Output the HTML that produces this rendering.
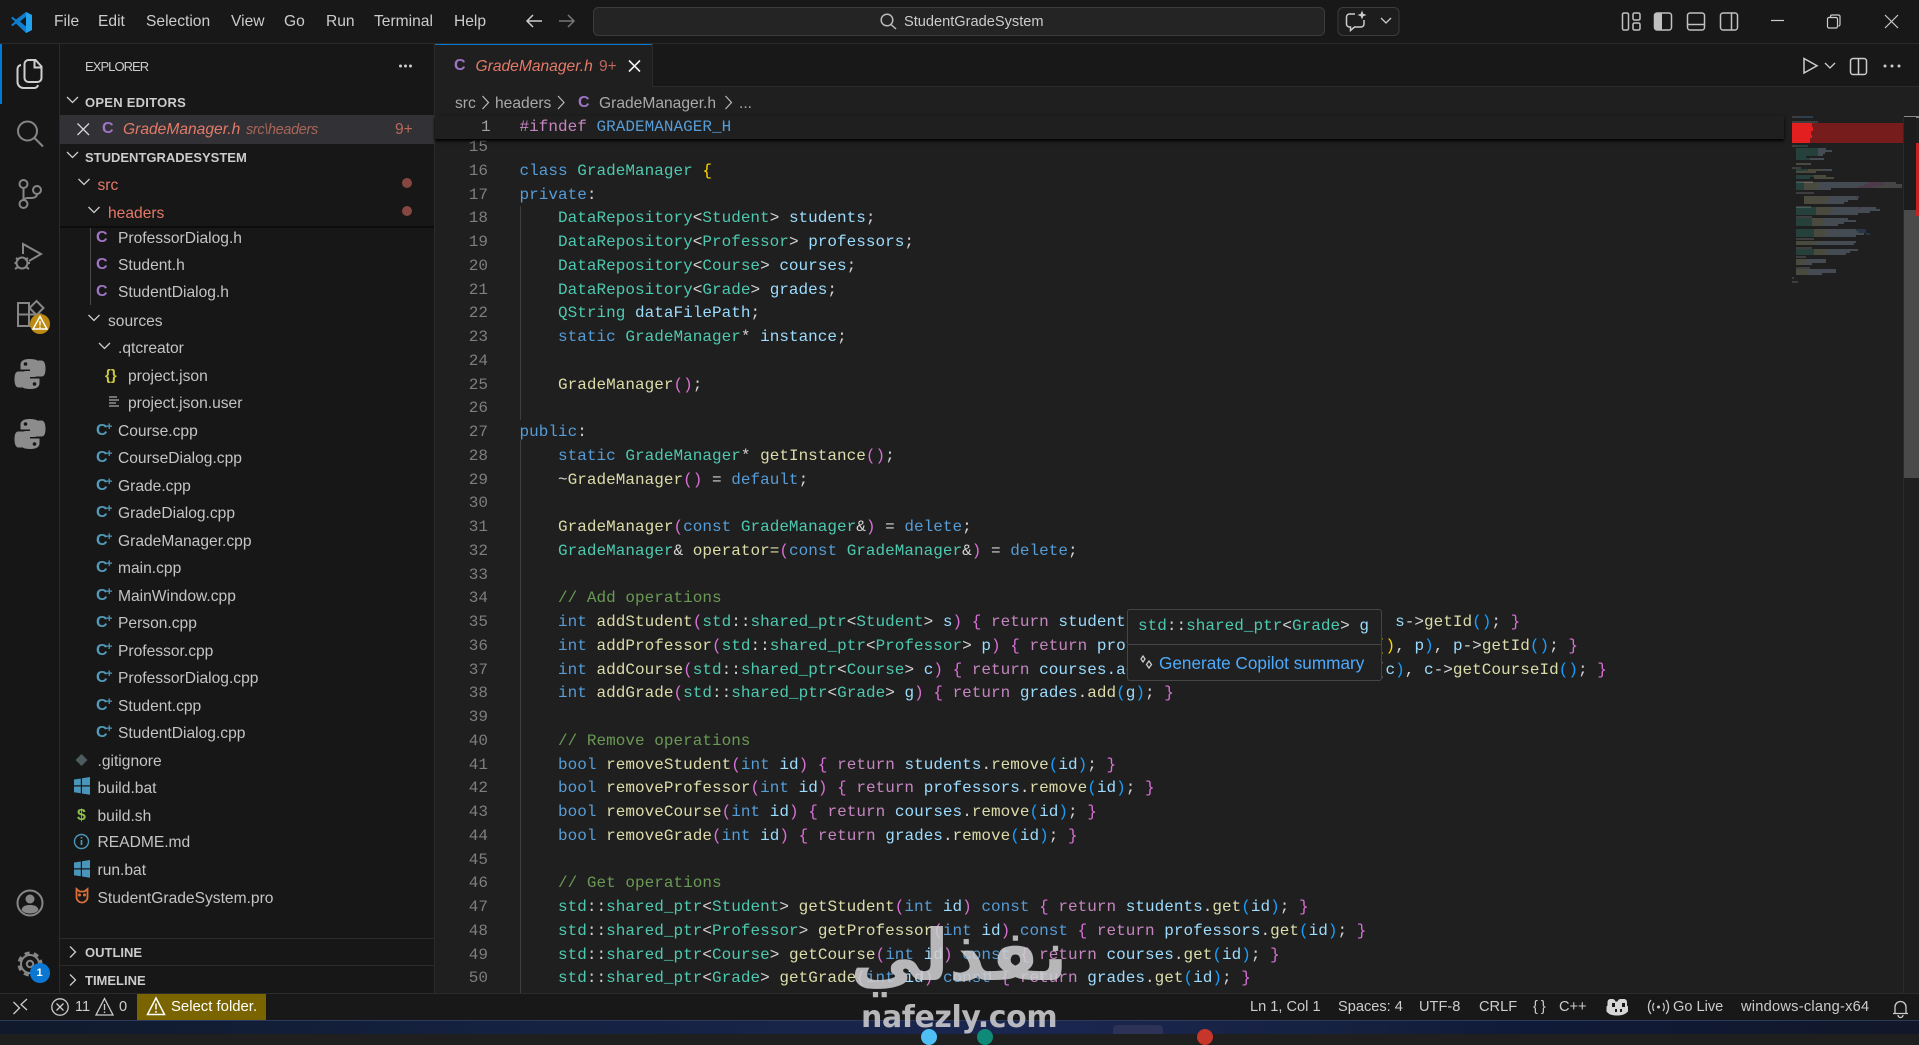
<!DOCTYPE html>
<html><head><meta charset="utf-8"><title>GradeManager.h - StudentGradeSystem</title>
<style>
html,body{margin:0;padding:0;background:#1f1f1f}
body{width:1919px;height:1034px;position:relative;overflow:hidden;font-family:"Liberation Sans",sans-serif;color:#ccc}
.a{position:absolute}
.t{position:absolute;white-space:pre;line-height:20px;font-size:15.6px;color:#ccc}
.h{font-weight:bold;font-size:13px;color:#ccc}
.e{color:#e47a68}
.m{color:#c4c4c4}
.m,.e,.h{margin-top:1px}
.ic{position:absolute;white-space:pre;line-height:20px;font-weight:bold;font-size:16px;margin-top:1px}
.cc{color:#a074c4}
.cp{color:#519aba;font-size:16px}
.cp sup{font-size:11px;position:absolute;left:10px;top:-4px}
svg{position:absolute;left:0;top:0;overflow:visible}
pre{margin:0;position:absolute;font-family:"Liberation Mono",monospace;font-size:16px;letter-spacing:.02px;line-height:23.75px;color:#d4d4d4}
.k{color:#569cd6}.c{color:#c586c0}.y{color:#4ec9b0}.f{color:#dcdcaa}.v{color:#9cdcfe}.o{color:#6a9955}.p{color:#da70d6}.b{color:#179fff}.g{color:#ffd700}
.st{position:absolute;white-space:pre;line-height:20px;font-size:14.6px;color:#ccc;top:997px}
</style></head><body>

<!-- backgrounds -->
<div class="a" style="left:0;top:0;width:1919px;height:43px;background:#181818"></div>
<div class="a" style="left:0;top:43px;width:1919px;height:1px;background:#2b2b2b"></div>
<div class="a" style="left:0;top:44px;width:59px;height:949px;background:#161616"></div>
<div class="a" style="left:59px;top:44px;width:376px;height:949px;background:#171717"></div>
<div class="a" style="left:59px;top:44px;width:1px;height:949px;background:#2b2b2b"></div>
<div class="a" style="left:434px;top:44px;width:1px;height:949px;background:#2b2b2b"></div>
<div class="a" style="left:435px;top:44px;width:1484px;height:42px;background:#181818"></div>
<div class="a" style="left:435px;top:86px;width:1484px;height:1px;background:#2b2b2b"></div>
<div class="a" style="left:0;top:44px;width:2px;height:60px;background:#0078d4"></div>

<!-- title bar -->
<svg width="1919" height="44" viewBox="0 0 1919 44">
<path d="M26 12l6 3v15l-6 3-10-9.5-3.500 2.800L11 25l4-3.500L11 18l1.500-1.300L16 19.500z" fill="#0e7fd0"/>
<path d="M26 16.500l-6 5 6 5z" fill="#181818"/>
<path d="M26 12l6 3v15l-6 3z" fill="#23a2ee"/>
<path d="M527 21h15M533 15l-6 6 6 6" fill="none" stroke="#ccc" stroke-width="1.500"/>
<path d="M559 21h15M568 15l6 6-6 6" fill="none" stroke="#777" stroke-width="1.500"/>
<rect x="593.500" y="7.500" width="731" height="28" rx="5" fill="#242424" stroke="#3c3c3c"/>
<circle cx="887" cy="20" r="5.800" fill="none" stroke="#bbb" stroke-width="1.500"/><path d="M891 24.500l5 4.500" stroke="#bbb" stroke-width="1.500"/>
<rect x="1338" y="7.500" width="61" height="28" rx="5" fill="#1d1d1d" stroke="#3c3c3c"/>
<path d="M1355 14h-5.500a3 3 0 0 0-3 3v7a3 3 0 0 0 3 3h1v3.500l4-3.500h6.500a3 3 0 0 0 3-3v-4" fill="none" stroke="#ccc" stroke-width="1.500"/>
<path d="M1362 10.500l1.300 3.200 3.200 1.300-3.200 1.300-1.300 3.200-1.300-3.200-3.200-1.300 3.200-1.300z" fill="#ccc"/>
<path d="M1381 18l5 5 5-5" fill="none" stroke="#ccc" stroke-width="1.300"/>
<g fill="none" stroke="#c0c0c0" stroke-width="1.500" transform="translate(-1 0)">
<rect x="1623.500" y="13" width="6" height="17" rx="1.500"/><rect x="1634" y="13" width="7" height="7" rx="1.500"/><rect x="1634" y="23" width="7" height="7" rx="1.500"/>
<rect x="1655.500" y="13" width="17" height="17" rx="2.500"/>
<rect x="1688.500" y="13" width="17" height="17" rx="2.500"/><path d="M1688.500 24.500h17"/>
<rect x="1721.500" y="13" width="17" height="17" rx="2.500"/><path d="M1732.500 13v17"/>
</g>
<path d="M1655 15.500a2 2 0 0 1 2-2h5v16h-5a2 2 0 0 1-2-2z" fill="#c0c0c0"/>
<path d="M1771 20.500h13" stroke="#ccc" stroke-width="1.200"/>
<rect x="1827.500" y="17.500" width="10" height="10.500" rx="1.500" fill="none" stroke="#ccc" stroke-width="1.200"/>
<path d="M1830.500 17v-1a1.500 1.500 0 0 1 1.500-1h6.500a1.500 1.500 0 0 1 1.500 1.500v8a1.500 1.500 0 0 1-1.500 1.500" fill="none" stroke="#ccc" stroke-width="1.200"/>
<path d="M1885 15l13 13M1898 15l-13 13" stroke="#ccc" stroke-width="1.200"/>
</svg>
<div class="t" style="left:54px;top:12px">File</div>
<div class="t" style="left:98px;top:12px">Edit</div>
<div class="t" style="left:146px;top:12px">Selection</div>
<div class="t" style="left:231px;top:12px">View</div>
<div class="t" style="left:284px;top:12px">Go</div>
<div class="t" style="left:326px;top:12px">Run</div>
<div class="t" style="left:374px;top:12px">Terminal</div>
<div class="t" style="left:454px;top:12px">Help</div>
<div class="t" style="left:904px;top:12px;font-size:14.6px">StudentGradeSystem</div>

<!-- activity bar -->
<svg width="60" height="1000" viewBox="0 0 60 1000">
<g fill="none" stroke="#cfcfcf" stroke-width="2" transform="translate(-.5 0)">
<path d="M29 60h7l6 6.500V78a4 4 0 0 1-4 4H29a4 4 0 0 1-4-4V64a4 4 0 0 1 4-4z"/><path d="M35 60v7.500h7"/>
<path d="M21.500 65a4 4 0 0 0-3.500 4v13a6 6 0 0 0 6 6h11a4 4 0 0 0 3.500-3"/>
</g>
<g fill="none" stroke="#868686" stroke-width="2">
<circle cx="27.500" cy="131" r="9.500"/><path d="M34.500 138l8.500 8.500"/>
<circle cx="23.500" cy="184" r="4"/><circle cx="23.500" cy="204" r="4"/><circle cx="37" cy="190" r="4"/>
<path d="M23.500 188v12M37 194c0 3-3 4-6 4h-3c-2 0-4 1-4.500 2"/>
<path d="M23 254v-10l18 10-12 7"/>
<circle cx="22" cy="263" r="5.500"/><path d="M16 258l3 2M28 258l-3 2M14.500 263h2M27.500 263h2.500M15 269l3-2M29 269l-3-2"/>
<path d="M18 303h11v23H18zM18 314.500h23V326H29"/>
<path d="M36.500 301l7 7-7 7-7-7z"/>
<circle cx="30" cy="903" r="12.500"/>
<circle cx="30" cy="964" r="9"/><circle cx="30" cy="964" r="3.200"/>
<circle cx="30" cy="964" r="11" stroke-width="3" stroke-dasharray="5 4.220"/>
</g>
<circle cx="30" cy="899" r="4.500" fill="#868686"/><path d="M21.500 910c1-4 4-5 8.500-5s7.500 1 8.500 5c-2 2.500-5 3.500-8.500 3.500s-6.500-1-8.500-3.500z" fill="#868686"/>
<circle cx="40" cy="324" r="10" fill="#bd8a11"/>
<path d="M40 316.500l7 12.500H33z" fill="none" stroke="#fff" stroke-width="1.500"/><path d="M40 321v4.500M40 326.500v1.500" stroke="#fff" stroke-width="1.300"/>
<circle cx="40" cy="973" r="10" fill="#0a78d2"/>
<g id="py1" fill="#8c8c8c">
<path d="M30 359c-8 0-9.500 3-9.500 6v4.500H30v2H18.500c-3 0-4 3-4 8s1.500 8 4 8H22v-5c0-3 2-5.500 5-5.500h7c3 0 5.500-2 5.500-5v-8c0-3-3-5-9.500-5z"/>
<path d="M30 389c8 0 9.500-3 9.500-6v-4.500H30v-2h11.500c3 0 4-3 4-8s-1.500-8-4-8H38v5c0 3-2 5.500-5 5.500h-7c-3 0-5.500 2-5.500 5v8c0 3 3 5 9.500 5z"/>
<circle cx="25.500" cy="364" r="1.800" fill="#161616"/><circle cx="34.500" cy="384" r="1.800" fill="#161616"/>
<path d="M30 419c-8 0-9.500 3-9.500 6v4.500H30v2H18.500c-3 0-4 3-4 8s1.500 8 4 8H22v-5c0-3 2-5.500 5-5.500h7c3 0 5.500-2 5.500-5v-8c0-3-3-5-9.500-5z"/>
<path d="M30 449c8 0 9.500-3 9.500-6v-4.500H30v-2h11.500c3 0 4-3 4-8s-1.500-8-4-8H38v5c0 3-2 5.500-5 5.500h-7c-3 0-5.500 2-5.500 5v8c0 3 3 5 9.500 5z"/>
<circle cx="25.500" cy="424" r="1.800" fill="#161616"/><circle cx="34.500" cy="444" r="1.800" fill="#161616"/>
</g>
</svg>
<div class="t" style="left:36.500px;top:963px;font-size:11px;font-weight:bold;color:#fff">1</div>

<!-- sidebar -->
<div class="a" style="left:60px;top:115px;width:374px;height:29px;background:#323236"></div>
<div class="t h" style="left:85px;top:56px;letter-spacing:-.95px;font-weight:normal">EXPLORER</div>
<div class="t h" style="left:85px;top:92px;letter-spacing:.25px">OPEN EDITORS</div>
<div class="t h" style="left:85px;top:147px">STUDENTGRADESYSTEM</div>
<div class="t h" style="left:85px;top:942px">OUTLINE</div>
<div class="t h" style="left:85px;top:970px">TIMELINE</div>
<div class="a" style="left:60px;top:938px;width:374px;height:1px;background:#2b2b2b"></div>
<div class="a" style="left:60px;top:965px;width:374px;height:1px;background:#2b2b2b"></div>
<div class="a" style="left:60px;top:226px;width:374px;height:2px;background:#0c0c0c"></div>
<div class="a" style="left:90px;top:228px;width:1px;height:77px;background:#4a4a4a"></div>
<svg width="440" height="1000" viewBox="0 0 440 1000">
<g fill="#ccc"><circle cx="400.500" cy="66" r="1.500"/><circle cx="405.500" cy="66" r="1.500"/><circle cx="410.500" cy="66" r="1.500"/></g>
<g fill="none" stroke="#ccc" stroke-width="1.300">
<path d="M67 97l5.500 5.500L78 97M67 152l5.500 5.500L78 152M78.500 179l5.500 5.500 5.500-5.500M88.500 207l5.500 5.500 5.500-5.500M88.500 315l5.500 5.500 5.500-5.500M99 343l5.500 5.500 5.500-5.500"/>
<path d="M70 946.500l5.500 5.500-5.500 5.500M70 974.500l5.500 5.500-5.500 5.500"/>
<path d="M77.500 123.500l11.500 11.500M89 123.500l-11.500 11.500" stroke="#d8d8d8"/>
<path d="M110 397h8M110 400h10M110 403h7M110 406h10" stroke-width="1.100" transform="translate(-1 0)"/>
</g>
<circle cx="407" cy="183" r="5" fill="#85473f"/><circle cx="407" cy="211" r="5" fill="#85473f"/>
<path d="M81.500 754l6 6-6 6-6-6z" fill="#4d5a60"/>
<g fill="#4a96ba">
<path d="M74 779.500l6.800-1v6.800H74zM82 778.300l8-1.300v8.300h-8zM74 786.500h6.800v6.800l-6.800-1zM82 786.500h8v8.300l-8-1.300z"/>
<path d="M74 862.500l6.800-1v6.800H74zM82 861.300l8-1.300v8.300h-8zM74 869.500h6.800v6.800l-6.800-1zM82 869.500h8v8.300l-8-1.300z"/>
</g>
<circle cx="81.500" cy="841.500" r="7" fill="none" stroke="#4a96ba" stroke-width="1.400"/>
<path d="M81.500 840v5M81.500 837v1.500" stroke="#4a96ba" stroke-width="1.700"/>
<path d="M76 889l3 2.500h5l3-2.500v8a5.500 5.500 0 0 1-11 0z" fill="none" stroke="#d9703a" stroke-width="1.800" transform="translate(.5 0)"/>
<circle cx="79.500" cy="895" r="1.500" fill="#d9703a"/><circle cx="84.500" cy="895" r="1.500" fill="#d9703a"/>
</svg>
<div class="ic cc" style="left:102px;top:118px">C</div>
<div class="t e" style="left:123px;top:119px;font-style:italic">GradeManager.h</div>
<div class="t" style="left:246px;top:120px;font-style:italic;font-size:14.4px;color:#a86558;letter-spacing:-.3px">src\headers</div>
<div class="t" style="left:395px;top:120px;color:#b9685a">9+</div>
<div class="t e" style="left:97.500px;top:175px">src</div>
<div class="t e" style="left:108px;top:203px">headers</div>
<div class="ic cc" style="left:96px;top:227px">C</div><div class="t m" style="left:118px;top:228px">ProfessorDialog.h</div>
<div class="ic cc" style="left:96px;top:254px">C</div><div class="t m" style="left:118px;top:255px">Student.h</div>
<div class="ic cc" style="left:96px;top:281px">C</div><div class="t m" style="left:118px;top:282px">StudentDialog.h</div>
<div class="t m" style="left:108px;top:311px">sources</div>
<div class="t m" style="left:118px;top:338px">.qtcreator</div>
<div class="ic" style="left:105px;top:365px;color:#cbcb41;font-size:15px">{}</div><div class="t m" style="left:128px;top:366px">project.json</div>
<div class="t m" style="left:128px;top:393px">project.json.user</div>
<div class="ic cp" style="left:96px;top:420px">C<sup>+</sup></div><div class="t m" style="left:118px;top:421px">Course.cpp</div>
<div class="ic cp" style="left:96px;top:447px">C<sup>+</sup></div><div class="t m" style="left:118px;top:448px">CourseDialog.cpp</div>
<div class="ic cp" style="left:96px;top:475px">C<sup>+</sup></div><div class="t m" style="left:118px;top:476px">Grade.cpp</div>
<div class="ic cp" style="left:96px;top:502px">C<sup>+</sup></div><div class="t m" style="left:118px;top:503px">GradeDialog.cpp</div>
<div class="ic cp" style="left:96px;top:530px">C<sup>+</sup></div><div class="t m" style="left:118px;top:531px">GradeManager.cpp</div>
<div class="ic cp" style="left:96px;top:557px">C<sup>+</sup></div><div class="t m" style="left:118px;top:558px">main.cpp</div>
<div class="ic cp" style="left:96px;top:585px">C<sup>+</sup></div><div class="t m" style="left:118px;top:586px">MainWindow.cpp</div>
<div class="ic cp" style="left:96px;top:612px">C<sup>+</sup></div><div class="t m" style="left:118px;top:613px">Person.cpp</div>
<div class="ic cp" style="left:96px;top:640px">C<sup>+</sup></div><div class="t m" style="left:118px;top:641px">Professor.cpp</div>
<div class="ic cp" style="left:96px;top:667px">C<sup>+</sup></div><div class="t m" style="left:118px;top:668px">ProfessorDialog.cpp</div>
<div class="ic cp" style="left:96px;top:695px">C<sup>+</sup></div><div class="t m" style="left:118px;top:696px">Student.cpp</div>
<div class="ic cp" style="left:96px;top:722px">C<sup>+</sup></div><div class="t m" style="left:118px;top:723px">StudentDialog.cpp</div>
<div class="t m" style="left:97.500px;top:751px">.gitignore</div>
<div class="t m" style="left:97.500px;top:778px">build.bat</div>
<div class="ic" style="left:77px;top:805px;color:#8dc149;font-size:16px">$</div><div class="t m" style="left:97.500px;top:806px">build.sh</div>
<div class="t m" style="left:97.500px;top:832px">README.md</div>
<div class="t m" style="left:97.500px;top:860px">run.bat</div>
<div class="t m" style="left:97.500px;top:888px">StudentGradeSystem.pro</div>

<!-- tabs -->
<div class="a" style="left:435px;top:44px;width:217px;height:43px;background:#1f1f1f"></div>
<div class="a" style="left:435px;top:44px;width:217px;height:1px;background:#0078d4"></div>
<div class="a" style="left:652px;top:44px;width:1px;height:42px;background:#2b2b2b"></div>
<div class="ic cc" style="left:454px;top:55px">C</div>
<div class="t e" style="left:475.500px;top:56px;font-style:italic">GradeManager.h</div>
<div class="t" style="left:599px;top:57px;color:#b9685a">9+</div>
<svg width="1919" height="120" viewBox="0 0 1919 120">
<path d="M629 60.500l11 11M640 60.500l-11 11" stroke="#f0f0f0" stroke-width="1.600"/>
<path d="M1804 58.500v14.500l13-7.250z" fill="none" stroke="#ccc" stroke-width="1.500"/>
<path d="M1825 63l5 5 5-5" fill="none" stroke="#ccc" stroke-width="1.300"/>
<rect x="1850.500" y="58.500" width="16" height="16" rx="2.500" fill="none" stroke="#ccc" stroke-width="1.500"/><path d="M1858.500 58.500v16" stroke="#ccc" stroke-width="1.500"/>
<g fill="#ccc"><circle cx="1885" cy="66" r="1.500"/><circle cx="1892" cy="66" r="1.500"/><circle cx="1899" cy="66" r="1.500"/></g>
<g fill="none" stroke="#bbb" stroke-width="1.200"><path d="M482.500 96l6 6.500-6 6.500M558 96l6 6.500-6 6.500M725.500 96l6 6.500-6 6.500"/></g>
</svg>

<!-- breadcrumb -->
<div class="t" style="left:455px;top:94px;color:#a9a9a9">src</div>
<div class="t" style="left:495px;top:94px;color:#a9a9a9">headers</div>
<div class="ic cc" style="left:578px;top:92px">C</div>
<div class="t" style="left:599px;top:94px;color:#a9a9a9">GradeManager.h</div>
<div class="t" style="left:739px;top:94px;color:#a9a9a9">...</div>

<!-- guides -->
<div class="a" style="left:520px;top:206px;width:1px;height:214px;background:#3f3f3f"></div>
<div class="a" style="left:520px;top:440px;width:1px;height:553px;background:#3f3f3f"></div>

<!-- line numbers -->
<pre style="right:1431px;top:136.200px;text-align:right;color:#7e7e7e">15
16
17
18
19
20
21
22
23
24
25
26
27
28
29
30
31
32
33
34
35
36
37
38
39
40
41
42
43
44
45
46
47
48
49
50</pre>

<!-- code -->
<pre style="left:519.500px;top:136.200px">

<span class="k">class</span> <span class="y">GradeManager</span> <span class="g">{</span>
<span class="k">private</span>:
    <span class="y">DataRepository</span>&lt;<span class="y">Student</span>&gt; <span class="v">students</span>;
    <span class="y">DataRepository</span>&lt;<span class="y">Professor</span>&gt; <span class="v">professors</span>;
    <span class="y">DataRepository</span>&lt;<span class="y">Course</span>&gt; <span class="v">courses</span>;
    <span class="y">DataRepository</span>&lt;<span class="y">Grade</span>&gt; <span class="v">grades</span>;
    <span class="y">QString</span> <span class="v">dataFilePath</span>;
    <span class="k">static</span> <span class="y">GradeManager</span>* <span class="v">instance</span>;

    <span class="f">GradeManager</span><span class="p">()</span>;

<span class="k">public</span>:
    <span class="k">static</span> <span class="y">GradeManager</span>* <span class="f">getInstance</span><span class="p">()</span>;
    ~<span class="f">GradeManager</span><span class="p">()</span> = <span class="k">default</span>;

    <span class="f">GradeManager</span><span class="p">(</span><span class="k">const</span> <span class="y">GradeManager</span>&amp;<span class="p">)</span> = <span class="k">delete</span>;
    <span class="y">GradeManager</span>&amp; <span class="f">operator=</span><span class="p">(</span><span class="k">const</span> <span class="y">GradeManager</span>&amp;<span class="p">)</span> = <span class="k">delete</span>;

    <span class="o">// Add operations</span>
    <span class="k">int</span> <span class="f">addStudent</span><span class="p">(</span><span class="y">std</span>::<span class="y">shared_ptr</span>&lt;<span class="y">Student</span>&gt; <span class="v">s</span><span class="p">)</span> <span class="p">{</span> <span class="c">return</span> <span class="v">students.add(std::move(s-&gt;data()</span><span class="b">)</span>, <span class="v">s</span>-&gt;<span class="f">getId</span><span class="b">()</span>; <span class="p">}</span>
    <span class="k">int</span> <span class="f">addProfessor</span><span class="p">(</span><span class="y">std</span>::<span class="y">shared_ptr</span>&lt;<span class="y">Professor</span>&gt; <span class="v">p</span><span class="p">)</span> <span class="p">{</span> <span class="c">return</span> <span class="v">professors.add(std::pair(p-&gt;x</span><span class="g">()</span>, <span class="v">p</span><span class="b">)</span>, <span class="v">p</span>-&gt;<span class="f">getId</span><span class="b">()</span>; <span class="p">}</span>
    <span class="k">int</span> <span class="f">addCourse</span><span class="p">(</span><span class="y">std</span>::<span class="y">shared_ptr</span>&lt;<span class="y">Course</span>&gt; <span class="v">c</span><span class="p">)</span> <span class="p">{</span> <span class="c">return</span> <span class="v">courses.add(c-&gt;getCourseId(),  move(c</span><span class="b">)</span>, <span class="v">c</span>-&gt;<span class="f">getCourseId</span><span class="b">()</span>; <span class="p">}</span>
    <span class="k">int</span> <span class="f">addGrade</span><span class="p">(</span><span class="y">std</span>::<span class="y">shared_ptr</span>&lt;<span class="y">Grade</span>&gt; <span class="v">g</span><span class="p">)</span> <span class="p">{</span> <span class="c">return</span> <span class="v">grades</span>.<span class="f">add</span><span class="b">(</span><span class="v">g</span><span class="b">)</span>; <span class="p">}</span>

    <span class="o">// Remove operations</span>
    <span class="k">bool</span> <span class="f">removeStudent</span><span class="p">(</span><span class="k">int</span> <span class="v">id</span><span class="p">)</span> <span class="p">{</span> <span class="c">return</span> <span class="v">students</span>.<span class="f">remove</span><span class="b">(</span><span class="v">id</span><span class="b">)</span>; <span class="p">}</span>
    <span class="k">bool</span> <span class="f">removeProfessor</span><span class="p">(</span><span class="k">int</span> <span class="v">id</span><span class="p">)</span> <span class="p">{</span> <span class="c">return</span> <span class="v">professors</span>.<span class="f">remove</span><span class="b">(</span><span class="v">id</span><span class="b">)</span>; <span class="p">}</span>
    <span class="k">bool</span> <span class="f">removeCourse</span><span class="p">(</span><span class="k">int</span> <span class="v">id</span><span class="p">)</span> <span class="p">{</span> <span class="c">return</span> <span class="v">courses</span>.<span class="f">remove</span><span class="b">(</span><span class="v">id</span><span class="b">)</span>; <span class="p">}</span>
    <span class="k">bool</span> <span class="f">removeGrade</span><span class="p">(</span><span class="k">int</span> <span class="v">id</span><span class="p">)</span> <span class="p">{</span> <span class="c">return</span> <span class="v">grades</span>.<span class="f">remove</span><span class="b">(</span><span class="v">id</span><span class="b">)</span>; <span class="p">}</span>

    <span class="o">// Get operations</span>
    <span class="y">std</span>::<span class="y">shared_ptr</span>&lt;<span class="y">Student</span>&gt; <span class="f">getStudent</span><span class="p">(</span><span class="k">int</span> <span class="v">id</span><span class="p">)</span> <span class="k">const</span> <span class="p">{</span> <span class="c">return</span> <span class="v">students</span>.<span class="f">get</span><span class="b">(</span><span class="v">id</span><span class="b">)</span>; <span class="p">}</span>
    <span class="y">std</span>::<span class="y">shared_ptr</span>&lt;<span class="y">Professor</span>&gt; <span class="f">getProfessor</span><span class="p">(</span><span class="k">int</span> <span class="v">id</span><span class="p">)</span> <span class="k">const</span> <span class="p">{</span> <span class="c">return</span> <span class="v">professors</span>.<span class="f">get</span><span class="b">(</span><span class="v">id</span><span class="b">)</span>; <span class="p">}</span>
    <span class="y">std</span>::<span class="y">shared_ptr</span>&lt;<span class="y">Course</span>&gt; <span class="f">getCourse</span><span class="p">(</span><span class="k">int</span> <span class="v">id</span><span class="p">)</span> <span class="k">const</span> <span class="p">{</span> <span class="c">return</span> <span class="v">courses</span>.<span class="f">get</span><span class="b">(</span><span class="v">id</span><span class="b">)</span>; <span class="p">}</span>
    <span class="y">std</span>::<span class="y">shared_ptr</span>&lt;<span class="y">Grade</span>&gt; <span class="f">getGrade</span><span class="p">(</span><span class="k">int</span> <span class="v">id</span><span class="p">)</span> <span class="k">const</span> <span class="p">{</span> <span class="c">return</span> <span class="v">grades</span>.<span class="f">get</span><span class="b">(</span><span class="v">id</span><span class="b">)</span>; <span class="p">}</span></pre>

<!-- sticky line -->
<div class="a" style="left:435px;top:116px;width:1349px;height:23px;background:#1f1f1f;box-shadow:0 2px 3px #000"></div>
<pre style="left:481px;top:116px;color:#a0a0a0">1</pre>
<pre style="left:519.500px;top:116px"><span class="c">#ifndef</span> <span class="k">GRADEMANAGER_H</span></pre>

<!-- hover popup -->
<div class="a" style="left:1127px;top:609px;width:253px;height:70px;background:#202020;border:1px solid #454545;border-radius:3px"></div>
<div class="a" style="left:1128px;top:644px;width:253px;height:1px;background:#454545"></div>
<pre style="left:1138px;top:615px"><span class="y">std</span>::<span class="y">shared_ptr</span>&lt;<span class="y">Grade</span>&gt; <span class="v">g</span></pre>
<svg width="1919" height="700" viewBox="0 0 1919 700"><path d="M1143 656l2 3-2 3-2-3zM1149 661l2.500 3.500-2.500 3.500-2.500-3.500z" fill="none" stroke="#ccc" stroke-width="1.300"/></svg>
<div class="t" style="left:1159px;top:653px;color:#4daafc;font-size:17.2px">Generate Copilot summary</div>

<!-- minimap -->
<svg width="1919" height="300" viewBox="0 0 1919 300">
<rect x="1792" y="123" width="112" height="20" fill="#771c1c"/>
<path d="M1792 123h20v4h1v4h-2v4h1v3h-2v5h-18z" fill="#e31f1f"/>
<g fill="none" stroke-width="1" opacity=".55">
<path stroke="#8d8d8d" d="M1792 117h8M1792 122h26M1792 146h6M1792 168h9M1796 182h17M1796 193h18M1796 207h15M1796 217h16M1796 239h18M1796 248h16M1796 257h10M1796 268h14M1792 278h2M1792 282h6"/>
<path stroke="#4f8fd0" d="M1800 117h13"/>
<path stroke="#3b9c88" d="M1798 146h10M1796 149h22M1796 151h22M1796 153h22M1796 155h22M1796 157h10M1796 159h14M1796 170h12M1796 176h18M1796 178h14M1796 183h8M1796 185h8M1796 187h8M1796 189h8M1796 219h16M1796 221h16M1796 223h16M1796 225h16M1796 230h18M1796 232h18M1796 234h18M1796 236h18M1796 250h18M1796 252h18M1796 254h18M1796 208h20M1796 210h20M1796 212h20M1796 214h20"/>
<path stroke="#bcbc94" d="M1796 164h15M1808 170h14M1796 172h20M1814 176h12M1814 178h20M1804 183h14M1804 185h16M1804 187h14M1804 189h12M1804 197h24M1804 199h26M1804 201h24M1804 203h22M1816 208h16M1816 210h18M1816 212h14M1816 214h12M1812 219h12M1812 221h14M1812 223h12M1812 225h10M1814 230h12M1814 232h14M1814 234h12M1814 236h12M1796 242h26M1796 244h18M1814 250h14M1814 252h12M1814 254h14M1796 260h10M1796 262h12M1796 264h8M1796 270h10M1796 272h14M1796 274h12"/>
<path stroke="#a6c0d8" d="M1818 149h8M1818 151h14M1818 153h7M1818 155h5M1810 159h14M1822 170h10M1818 183h50M1820 185h44M1818 187h40M1816 189h15M1828 197h28M1830 199h28M1828 201h20M1826 203h18M1832 208h44M1834 210h46M1830 212h40M1828 214h30M1824 219h24M1826 221h30M1824 223h20M1822 225h16M1826 230h34M1828 232h30M1826 234h38M1826 236h30M1822 242h34M1814 244h40M1828 250h30M1826 252h24M1828 254h18M1806 260h20M1808 262h18M1804 264h8M1806 270h30M1810 272h26M1808 274h14"/>
<path stroke="#c586c0" d="M1868 183h16M1864 185h20M1858 187h16M1856 197h3M1858 208h3"/>
<path stroke="#b0b0b0" d="M1884 183h12M1884 185h18M1874 187h28"/>
<path stroke="#3f6fa8" d="M1856 230h10M1858 232h8M1866 234h4"/>
</g>
</svg>

<!-- scrollbar -->
<div class="a" style="left:1903px;top:117px;width:16px;height:876px;border-left:1px solid #2a2a2a;box-sizing:border-box"></div>
<div class="a" style="left:1904px;top:116px;width:15px;height:1.500px;background:#8a8a8a"></div>
<div class="a" style="left:1904px;top:210px;width:15px;height:268px;background:#4a4a4a"></div>
<div class="a" style="left:1916px;top:143px;width:3px;height:73px;background:#c62020"></div>
<div class="a" style="left:1904px;top:117px;width:12px;height:93px;background:#1c1c1c"></div>

<!-- status bar -->
<div class="a" style="left:0;top:993px;width:1919px;height:27px;background:#181818;border-top:1px solid #2b2b2b;box-sizing:border-box"></div>
<div class="a" style="left:137px;top:994px;width:129px;height:26px;background:#7a6400"></div>
<svg width="1919" height="1034" viewBox="0 0 1919 1034">
<g fill="none" stroke="#ccc" stroke-width="1.300">
<path d="M13.500 1002l6 6-6 6M27 999l-6 5.500 6 5.500"/>
<circle cx="60" cy="1007" r="8.200"/><path d="M56.500 1003.500l7 7M63.500 1003.500l-7 7"/>
<path d="M104.500 998.500l8.500 16.500H96z"/><path d="M104.500 1004v6M104.500 1011.500v1.500"/>
<path d="M156 998l8.500 16.500h-17z" stroke="#fff" stroke-width="1.500"/><path d="M156 1003.500v6M156 1011v1.800" stroke="#fff" stroke-width="1.500"/>
<path d="M1893 1013.500h15M1895 1013v-6a5.500 5.500 0 0 1 11 0v6M1898 1015a2.500 2.500 0 0 0 5 0"/>
<path d="M1654 1003a7 7 0 0 0 0 8M1651 1000a11 11 0 0 0 0 14M1663 1003a7 7 0 0 1 0 8M1666 1000a11 11 0 0 1 0 14"/>
</g>
<circle cx="1658.500" cy="1007" r="1.500" fill="#ccc"/>
<path d="M1612 999a3.500 3.500 0 0 1 3.500 2.500h2a3.500 3.500 0 0 1 3.500-2.500h3c2 0 3 1.500 3 3.500v3l1 1v5c-3 3-6 4-11 4s-8-1-10.500-4v-5l1-1v-3c0-2 1-3.500 3-3.500z" fill="#d6d6d6"/>
<rect x="1612" y="1003" width="3" height="4" fill="#181818"/><rect x="1622" y="1003" width="3" height="4" fill="#181818"/>
<rect x="1615" y="1009" width="2" height="3" fill="#181818"/><rect x="1620" y="1009" width="2" height="3" fill="#181818"/>
</svg>
<div class="st" style="left:75px;top:997px">11</div>
<div class="st" style="left:119px">0</div>
<div class="st" style="left:171px;color:#fff;font-size:14.9px">Select folder.</div>
<div class="st" style="left:1250px">Ln 1, Col 1</div>
<div class="st" style="left:1338px">Spaces: 4</div>
<div class="st" style="left:1419px">UTF-8</div>
<div class="st" style="left:1479px">CRLF</div>
<div class="st" style="left:1533px;letter-spacing:3px">{}</div>
<div class="st" style="left:1559px">C++</div>
<div class="st" style="left:1673px">Go Live</div>
<div class="st" style="left:1741px;letter-spacing:.25px">windows-clang-x64</div>

<!-- taskbar -->
<div class="a" style="left:0;top:1020px;width:1919px;height:14px;background:linear-gradient(90deg,#101a2c 0%,#14213f 25%,#1b2650 55%,#15213f 70%,#0f1a38 80%,#121829 100%);border-top:1px solid #2c3a5c;box-sizing:border-box"></div>
<div class="a" style="left:1113px;top:1025px;width:50px;height:9px;background:#2d3357;border-radius:4px 4px 0 0"></div>
<div class="a" style="left:921px;top:1029px;width:16px;height:16px;border-radius:50%;background:#4fc0f5"></div>
<div class="a" style="left:977px;top:1029px;width:16px;height:16px;border-radius:50%;background:#0f8a78"></div>
<div class="a" style="left:1197px;top:1029px;width:16px;height:16px;border-radius:50%;background:#c7362b"></div>

<!-- watermark -->
<div class="t" dir="rtl" style="left:844px;top:901px;width:230px;text-align:center;line-height:110px;font-family:'DejaVu Sans',sans-serif;font-weight:bold;font-size:71px;color:rgba(205,205,208,.88)">نفذلي</div>
<div class="t" style="left:861px;top:998px;line-height:40px;font-family:'DejaVu Sans',sans-serif;font-weight:bold;font-size:30px;letter-spacing:-.4px;color:rgba(205,205,208,.88)">nafezly.com</div>
</body></html>
